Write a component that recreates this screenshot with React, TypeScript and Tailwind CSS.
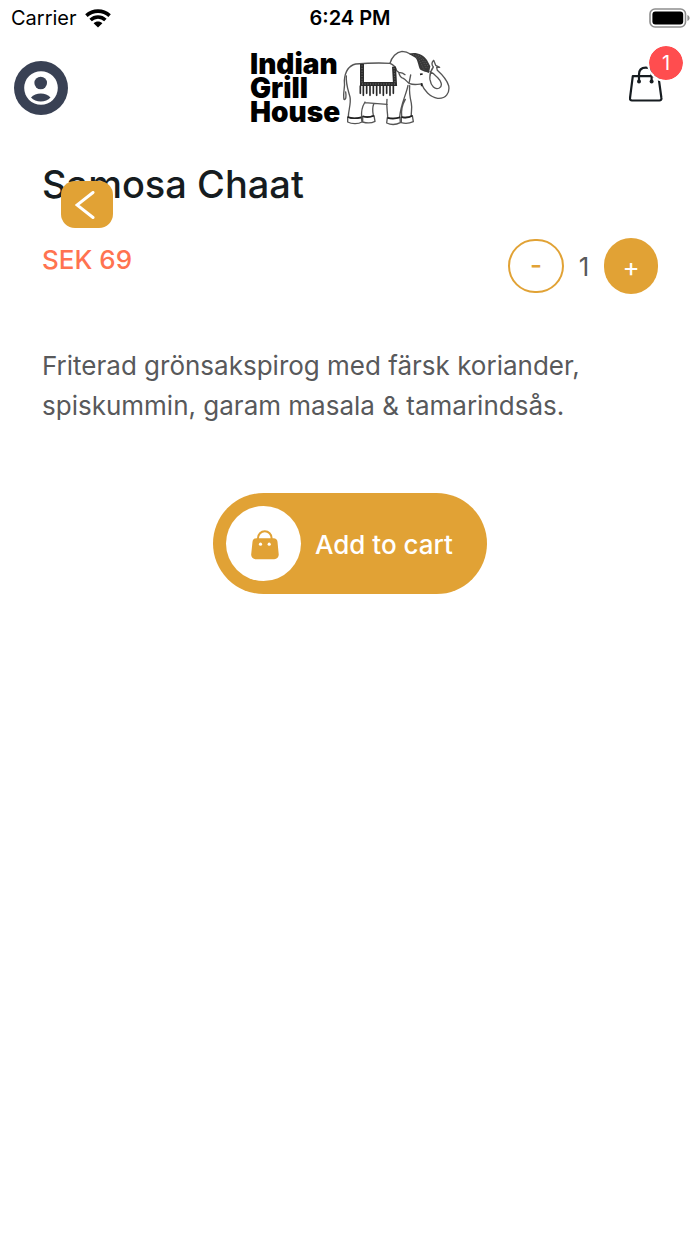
import React, { useState } from 'react';

const WifiIcon: React.FC = () => (
  <svg viewBox="0 0 26 19" className="h-[19px] w-[26px]" aria-hidden="true">
    <g fill="none" stroke="#000" strokeWidth="3.6">
      <path d="M1.4 6.6C8 .6 18 .6 24.6 6.6" />
      <path d="M5.6 11C10 7 16 7 20.4 11" />
    </g>
    <path d="M8.6 14.2C11 12 15 12 17.4 14.2L13 18.6Z" />
  </svg>
);

const BatteryIcon: React.FC = () => (
  <svg viewBox="0 0 41 20" className="h-5 w-[41px]" aria-hidden="true">
    <rect x="1" y="1" width="35.5" height="18" rx="5" fill="none" stroke="#8e8e8e" strokeWidth="1.6" />
    <rect x="3.4" y="3.6" width="30.8" height="12.8" rx="3" />
    <path d="M38.4 7v6c1.3-.7 2.2-1.7 2.2-3s-.9-2.3-2.2-3Z" fill="#8e8e8e" />
  </svg>
);

const ProfileIcon: React.FC = () => (
  <svg viewBox="0 0 54 54" className="size-[54px]" aria-hidden="true">
    <circle cx="27" cy="27" r="27" fill="#394154" />
    <circle cx="27" cy="27" r="16.8" fill="#fff" />
    <circle cx="26.7" cy="22" r="6.3" fill="#394154" />
    <path d="M17 36.500c4.500-5.200 15-5.200 19.500 0-4.500 5.200-15 5.200-19.500 0Z" fill="#394154" />
  </svg>
);

const BagIcon: React.FC = () => (
  <svg viewBox="0 0 34 36" className="h-9 w-[34px]" aria-hidden="true">
    <g fill="none" stroke="#161c20" strokeWidth="2.2" strokeLinecap="round" strokeLinejoin="round">
      <path d="M3.800 10.200h25.600l3 21.800a2 2 0 0 1-2 2.500H3a2 2 0 0 1-2-2.500Z" />
      <path d="M10 15V8.500C10 4 12.500 1.700 16.800 1.700S22.600 4 22.600 8.500V15" />
    </g>
    <circle cx="10" cy="15.5" r="2" fill="#161c20" />
    <circle cx="22.6" cy="15.5" r="2" fill="#161c20" />
  </svg>
);

const CartBagIcon: React.FC = () => (
  <svg viewBox="0 0 28 30" className="h-[30px] w-7" aria-hidden="true">
    <path d="M7 10V8a6.800 6.800 0 0 1 13.600 0v2" fill="none" stroke="#e1a235" strokeWidth="2" />
    <path
      d="M5.500 8.200h17a4 4 0 0 1 4 3.500l1.200 12.500a4.500 4.500 0 0 1-4.500 5H4.700a4.500 4.500 0 0 1-4.500-5L1.500 11.700a4 4 0 0 1 4-3.500Z"
      fill="#e1a235"
    />
    <circle cx="9.5" cy="14.2" r="1.6" fill="#fff" />
    <circle cx="18.2" cy="14.2" r="1.6" fill="#fff" />
  </svg>
);

const FRINGE = [361, 370, 380, 390, 400, 410, 420, 430, 440, 450, 460];

const Elephant: React.FC = () => (
  <svg viewBox="306 30 324 228" className="h-[76px] w-[108px]" aria-hidden="true">
    <g fill="none" stroke="#555" strokeWidth="4" strokeLinecap="round" strokeLinejoin="round">
      {/* back, tail and hind legs */}
      <path d="M452 70C420 68 372 70 347 72C326 77 315 95 313 122C316 142 308 160 312 178C318 181 319 168 317 156" />
      <path d="M319 108C317 132 325 152 330 171C334 190 325 212 325 230" />
      <path d="M375 186C366 201 363 216 365 232M374 188L441 193M401 192C396 206 398 217 400 226" />
      <path d="M323 231C334 236 351 236 364 232L366 246C354 253 335 252 323 246Z" />
      <path d="M368 229C379 232 391 231 402 227L405 244C394 250 378 249 368 246Z" />
      {/* front legs */}
      <path d="M441 178C438 199 443 214 443 232M504 136C499 163 481 196 479 231M509 137C507 160 511 177 514 190C517 205 513 216 514 226M496 178C486 195 483 212 485 230" />
      <path d="M442 233C454 236 468 236 480 232L481 248C467 255 451 254 440 249Z" />
      <path d="M484 231C495 234 507 232 517 227L520 245C509 250 494 251 484 248Z" />
      {/* head, ear and trunk */}
      <path d="M450 70C455 51 469 36 486 34C500 34 507 39 513 43" />
      <path d="M450 70C463 75 468 84 470 92L476 97C478 105 482 113 490 115C497 119 501 125 507 130L512 105M477 97C486 98 492 101 495 104M509 131C521 136 535 133 545 132" />
      <path d="M545 132C552 151 569 171 593 175C618 177 630 158 626 137C619 116 602 100 592 91L590 82L599 82L587 76L581 61C574 68 575 75 580 81C572 92 568 104 570 119C573 138 585 151 598 144C610 137 602 122 592 112C586 105 578 98 570 95" />
    </g>
    <path d="M507 42C523 34 549 42 561 60L571 79L567 99C556 94 545 94 539 86C534 75 534 61 526 53Z" fill="#383838" />
    <g fill="none" stroke="#8a8a8a" strokeWidth="2" strokeDasharray="2 5">
      <path d="M520 44C540 48 552 65 560 88M534 45C550 54 560 69 565 83M529 51C543 62 545 77 552 89" />
    </g>
    <path d="M540 103l8-1M545 130v9M323 231C337 237 351 235 364 232M368 229C380 233 392 231 402 227M442 233C454 237 468 236 480 232M484 231C496 235 508 232 517 227" fill="none" stroke="#222" strokeWidth="5" />
    {/* saddle cloth */}
    <path d="M366 72V132H465C464 112 463 96 462 80" fill="none" stroke="#2c2c2c" strokeWidth="12" />
    <path d="M366 76V132H465C464 112 463 96 462 82" fill="none" stroke="#999" strokeWidth="2" strokeDasharray="3 5" />
    <g stroke="#292929" strokeWidth="5" strokeLinecap="round">
      {FRINGE.map((x, i) => (
        <line key={x} x1={x} x2={x} y1="138" y2={i % 2 === 0 ? 160 : 166} />
      ))}
    </g>
  </svg>
);

const StatusBar: React.FC = () => (
  <div className="grid h-9 grid-cols-3 items-center px-2.5 text-xl text-black">
    <div className="flex items-center gap-2 pl-px">
      <span>Carrier</span>
      <WifiIcon />
    </div>
    <div className="text-center font-semibold">6:24 PM</div>
    <div className="flex justify-end">
      <BatteryIcon />
    </div>
  </div>
);

const Header: React.FC<{ count: number }> = ({ count }) => (
  <header className="grid h-[104px] grid-cols-[1fr_auto_1fr] items-center px-3.5">
    <button type="button" aria-label="Profile" className="w-fit rounded-full">
      <ProfileIcon />
    </button>
    <a href="#home" aria-label="Indian Grill House" className="flex items-center text-black">
      <span className="w-[92px] whitespace-nowrap text-[28px] leading-6 font-black">
        Indian
        <br />
        Grill
        <br />
        House
      </span>
      <Elephant />
    </a>
    <button type="button" aria-label="Cart" className="relative mr-[23px] mb-2 justify-self-end">
      <BagIcon />
      <span className="absolute -right-5 -top-5 flex size-[34px] items-center justify-center rounded-full bg-[#ff4d4f] text-xl text-white outline-2 outline-white">
        {count}
      </span>
    </button>
  </header>
);

export default function App() {
  const [quantity, setQuantity] = useState(1);
  const [cartCount, setCartCount] = useState(1);

  return (
    <div className="min-h-screen bg-white font-['Inter',sans-serif]">
      <StatusBar />
      <Header count={cartCount} />
      <main className="relative px-[42px] pt-5">
        <h1 className="text-[38px] leading-[48px] font-medium text-[#161c20]">Samosa Chaat</h1>
        <button
          type="button"
          aria-label="Back"
          className="absolute left-[61px] top-[41px] flex h-[47px] w-[52px] items-center justify-center rounded-[14px] bg-[#e1a235]"
        >
          <svg viewBox="0 0 20 28" className="mr-1 h-7 w-5" aria-hidden="true">
            <path d="M18 1.500L2 14L18 26.500" fill="none" stroke="#fff" strokeWidth="3" strokeLinecap="round" />
          </svg>
        </button>

        <div className="mt-[30px] flex items-start justify-between">
          <p className="text-[26px] leading-11 font-medium text-[#ff7350]">SEK 69</p>
          <div className="flex items-center text-[26px] text-[#58595b]">
            <button
              type="button"
              aria-label="Decrease quantity"
              onClick={() => setQuantity(Math.max(1, quantity - 1))}
              className="flex h-[54px] w-14 items-center justify-center rounded-full border-2 border-[#e1a235] pb-1 font-medium text-[#e1a235]"
            >
              -
            </button>
            <span className="w-10 text-center">{quantity}</span>
            <button
              type="button"
              aria-label="Increase quantity"
              onClick={() => setQuantity(quantity + 1)}
              className="flex h-14 w-[54px] items-center justify-center rounded-full bg-[#e1a235] text-white"
            >
              +
            </button>
          </div>
        </div>

        <p className="mt-[52px] text-[26px] leading-10 text-[#58595b]">
          Friterad grönsakspirog med färsk koriander, spiskummin, garam masala &amp; tamarindsås.
        </p>

        <button
          type="button"
          onClick={() => setCartCount(cartCount + quantity)}
          className="mx-auto mt-[67px] flex items-center gap-3.5 rounded-full bg-[#e1a235] py-[13px] pl-[13px] pr-[34px] text-[26px] font-medium text-white"
        >
          <span className="flex size-[75px] items-center justify-center rounded-full bg-white pt-0.5 pl-0.5">
            <CartBagIcon />
          </span>
          <span className="pt-0.5">Add to cart</span>
        </button>
      </main>
    </div>
  );
}
